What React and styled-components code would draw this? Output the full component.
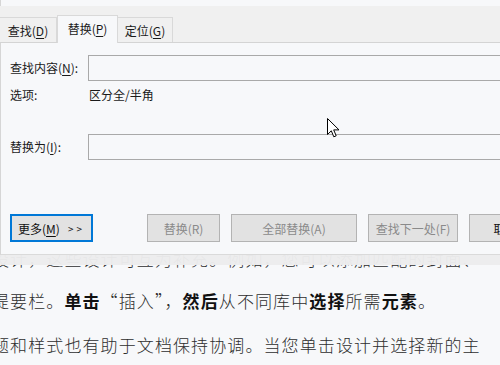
import React from "react";
import styled, { createGlobalStyle } from "styled-components";

const GlobalStyle = createGlobalStyle`
  html, body {
    margin: 0;
    padding: 0;
    background: #f7f8fa;
    overflow: hidden;
  }
`;

const Page = styled.div`
  position: relative;
  width: 500px;
  height: 365px;
  overflow: hidden;
  background: #f7f8fa;
`;

const Document = styled.div`
  padding-top: 237px;
  margin-left: -8px;
  font-family: "Noto Sans CJK SC", "Noto Sans", sans-serif;
  font-size: 17px;
  font-weight: 300;
  letter-spacing: 1.1px;
  line-height: 44px;
  color: #2e2e2e;
  white-space: nowrap;
`;

const Line = styled.div`
  height: ${(p) => p.$h || 44}px;
`;

const Strong = styled.b`
  font-weight: 700;
  color: #111;
`;

const Dialog = styled.div`
  position: absolute;
  top: 0;
  left: 0;
  width: 560px;
  background: #f7f8fa;
  border-left: 1px solid #d6d6d6;
  border-bottom: 1px solid #dadada;
  box-shadow: 0 10px 0 rgba(236, 236, 237, 0.97);
  font-family: "Noto Sans CJK SC", "Noto Sans", sans-serif;
  font-size: 12px;
  color: #1a1a1a;
  padding-top: 6px;
`;

const TabBar = styled.div`
  display: flex;
  align-items: flex-end;
  height: 36px;
  margin-left: -1px;
  background: #f0f0f0;
  border-bottom: 1px solid #d4d4d4;
`;

const Tab = styled.div`
  box-sizing: border-box;
  width: ${(p) => p.$w}px;
  height: ${(p) => (p.$active ? 28 : 25)}px;
  margin-bottom: ${(p) => (p.$active ? -1 : 0)}px;
  display: flex;
  align-items: center;
  justify-content: center;
  padding-bottom: ${(p) => (p.$active ? 2 : 0)}px;
  background: ${(p) => (p.$active ? "#f7f8fa" : "#f0f0f0")};
  border-top: 1px solid #d9d9d9;
  border-right: 1px solid #d9d9d9;
  border-left: ${(p) => (p.$active ? "1px solid #d9d9d9" : "none")};
`;

const Key = styled.span`
  text-decoration: underline;
  text-underline-offset: 2px;
`;

const Body = styled.div`
  padding: 12px 0 12px 9px;
`;

const FieldRow = styled.div`
  display: flex;
  align-items: center;
  margin-top: ${(p) => p.$top || 0}px;
`;

const Label = styled.label`
  width: 78px;
  flex-shrink: 0;
  line-height: 16px;
`;

const Input = styled.div`
  box-sizing: border-box;
  flex: 1;
  height: 26px;
  border: 1px solid #a9a9a9;
  background: #f7f8fa;
`;

const OptionText = styled.span`
  margin-left: 1px;
  line-height: 16px;
`;

const ButtonRow = styled.div`
  display: flex;
  gap: 11px;
  margin-top: 54px;
`;

const Button = styled.div`
  box-sizing: border-box;
  flex-shrink: 0;
  width: ${(p) => p.$w}px;
  height: 28px;
  display: flex;
  align-items: center;
  justify-content: ${(p) => (p.$primary ? "flex-start" : "center")};
  padding-left: ${(p) => (p.$primary ? 6 : 0)}px;
  margin-right: ${(p) => (p.$primary ? 43 : 0)}px;
  background: #e2e2e2;
  border: ${(p) => (p.$primary ? "2px solid #0078d7" : "1px solid #b3b3b3")};
  color: ${(p) => (p.$disabled ? "#8a8a8a" : "#111")};
`;

const Arrows = styled.span`
  margin-left: 8px;
  font-size: 10px;
  letter-spacing: 3px;
`;

const Cursor = styled.svg`
  position: absolute;
  left: 327px;
  top: 118px;
`;

export default function App() {
  return (
    <Page>
      <GlobalStyle />
      <Document>
        <Line $h={42}>设计，这些设计可互为补充。例如，您可以添加匹配的封面、</Line>
        <Line>
          提要栏。<Strong>单击</Strong>“插入”，<Strong>然后</Strong>从不同库中
          <Strong>选择</Strong>所需<Strong>元素</Strong>。
        </Line>
        <Line>题和样式也有助于文档保持协调。当您单击设计并选择新的主</Line>
      </Document>

      <Dialog>
        <TabBar>
          <Tab $w={57}>
            查找(<Key>D</Key>)
          </Tab>
          <Tab $w={61} $active>
            替换(<Key>P</Key>)
          </Tab>
          <Tab $w={55}>
            定位(<Key>G</Key>)
          </Tab>
        </TabBar>
        <Body>
          <FieldRow>
            <Label>
              查找内容(<Key>N</Key>):
            </Label>
            <Input />
          </FieldRow>
          <FieldRow $top={6}>
            <Label>选项:</Label>
            <OptionText>区分全/半角</OptionText>
          </FieldRow>
          <FieldRow $top={31}>
            <Label>
              替换为(<Key>I</Key>):
            </Label>
            <Input />
          </FieldRow>
          <ButtonRow>
            <Button $w={83} $primary>
              更多(<Key>M</Key>)<Arrows>&gt;&gt;</Arrows>
            </Button>
            <Button $w={73} $disabled>
              替换(R)
            </Button>
            <Button $w={126} $disabled>
              全部替换(A)
            </Button>
            <Button $w={90} $disabled>
              查找下一处(F)
            </Button>
            <Button $w={73}>取消</Button>
          </ButtonRow>
        </Body>
      </Dialog>

      <Cursor width="13" height="21" viewBox="0 0 13 21">
        <path
          d="M0.5 0.5 L0.5 16.5 L4.3 12.8 L6.8 18.8 L9.2 17.8 L6.7 11.9 L12 11.9 Z"
          fill="#fff"
          stroke="#000"
          strokeWidth="1"
          strokeLinejoin="miter"
        />
      </Cursor>
    </Page>
  );
}
